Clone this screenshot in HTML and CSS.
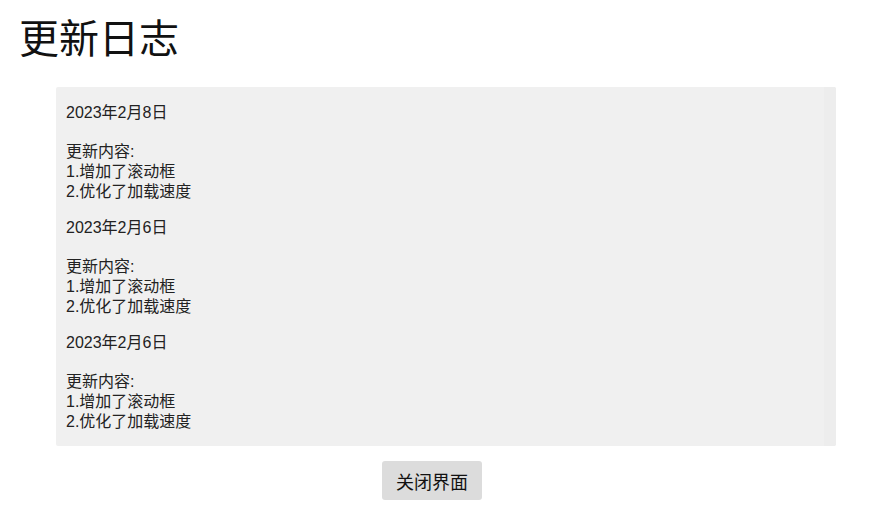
FILE: index.html
```html
<!DOCTYPE html>
<html lang="zh-CN">
<head>
<meta charset="utf-8">
<title>更新日志</title>
<link rel="stylesheet" href="styles.css">
</head>
<body>
<h1 class="title">更新日志</h1>
<div class="log">
  <div class="log-list">
    <div class="entry">
      <div class="date">2023年2月8日</div>
      <div class="content">更新内容:<br>1.增加了滚动框<br>2.优化了加载速度</div>
    </div>
    <div class="entry">
      <div class="date">2023年2月6日</div>
      <div class="content">更新内容:<br>1.增加了滚动框<br>2.优化了加载速度</div>
    </div>
    <div class="entry">
      <div class="date">2023年2月6日</div>
      <div class="content">更新内容:<br>1.增加了滚动框<br>2.优化了加载速度</div>
    </div>
  </div>
  <div class="track"></div>
</div>
<div class="actions">
  <button class="close-btn">关闭界面</button>
</div>
</body>
</html>
```

FILE: styles.css
```css
html, body {
  margin: 0;
  padding: 0;
  background: #ffffff;
}
body {
  font-family: "Liberation Sans", "Noto Sans CJK SC", sans-serif;
  color: #222222;
}
.title {
  margin: 0;
  padding: 14px 0 0 19px;
  font-size: 40px;
  line-height: 50px;
  font-weight: 400;
  color: #111111;
  height: 87px;
  box-sizing: border-box;
}
.log {
  margin-left: 56px;
  width: 780px;
  height: 359px;
  background: #f0f0f0;
  display: flex;
  border-radius: 2px;
}
.log-list {
  flex: 1;
  padding: 0 0 14px 10px;
}
.track {
  width: 12px;
  background: #ededed;
  border-radius: 0 2px 2px 0;
}
.entry {
  padding-top: 16px;
  font-size: 16px;
  line-height: 20px;
}
.date {
  margin-bottom: 19px;
}
.actions {
  padding: 15px 0 0 382px;
}
.close-btn {
  width: 100px;
  height: 39px;
  border: none;
  border-radius: 3px;
  background: #dcdcdc;
  font-family: "Liberation Sans", "Noto Sans CJK SC", sans-serif;
  font-size: 18px;
  color: #111111;
  padding: 0;
}
```
